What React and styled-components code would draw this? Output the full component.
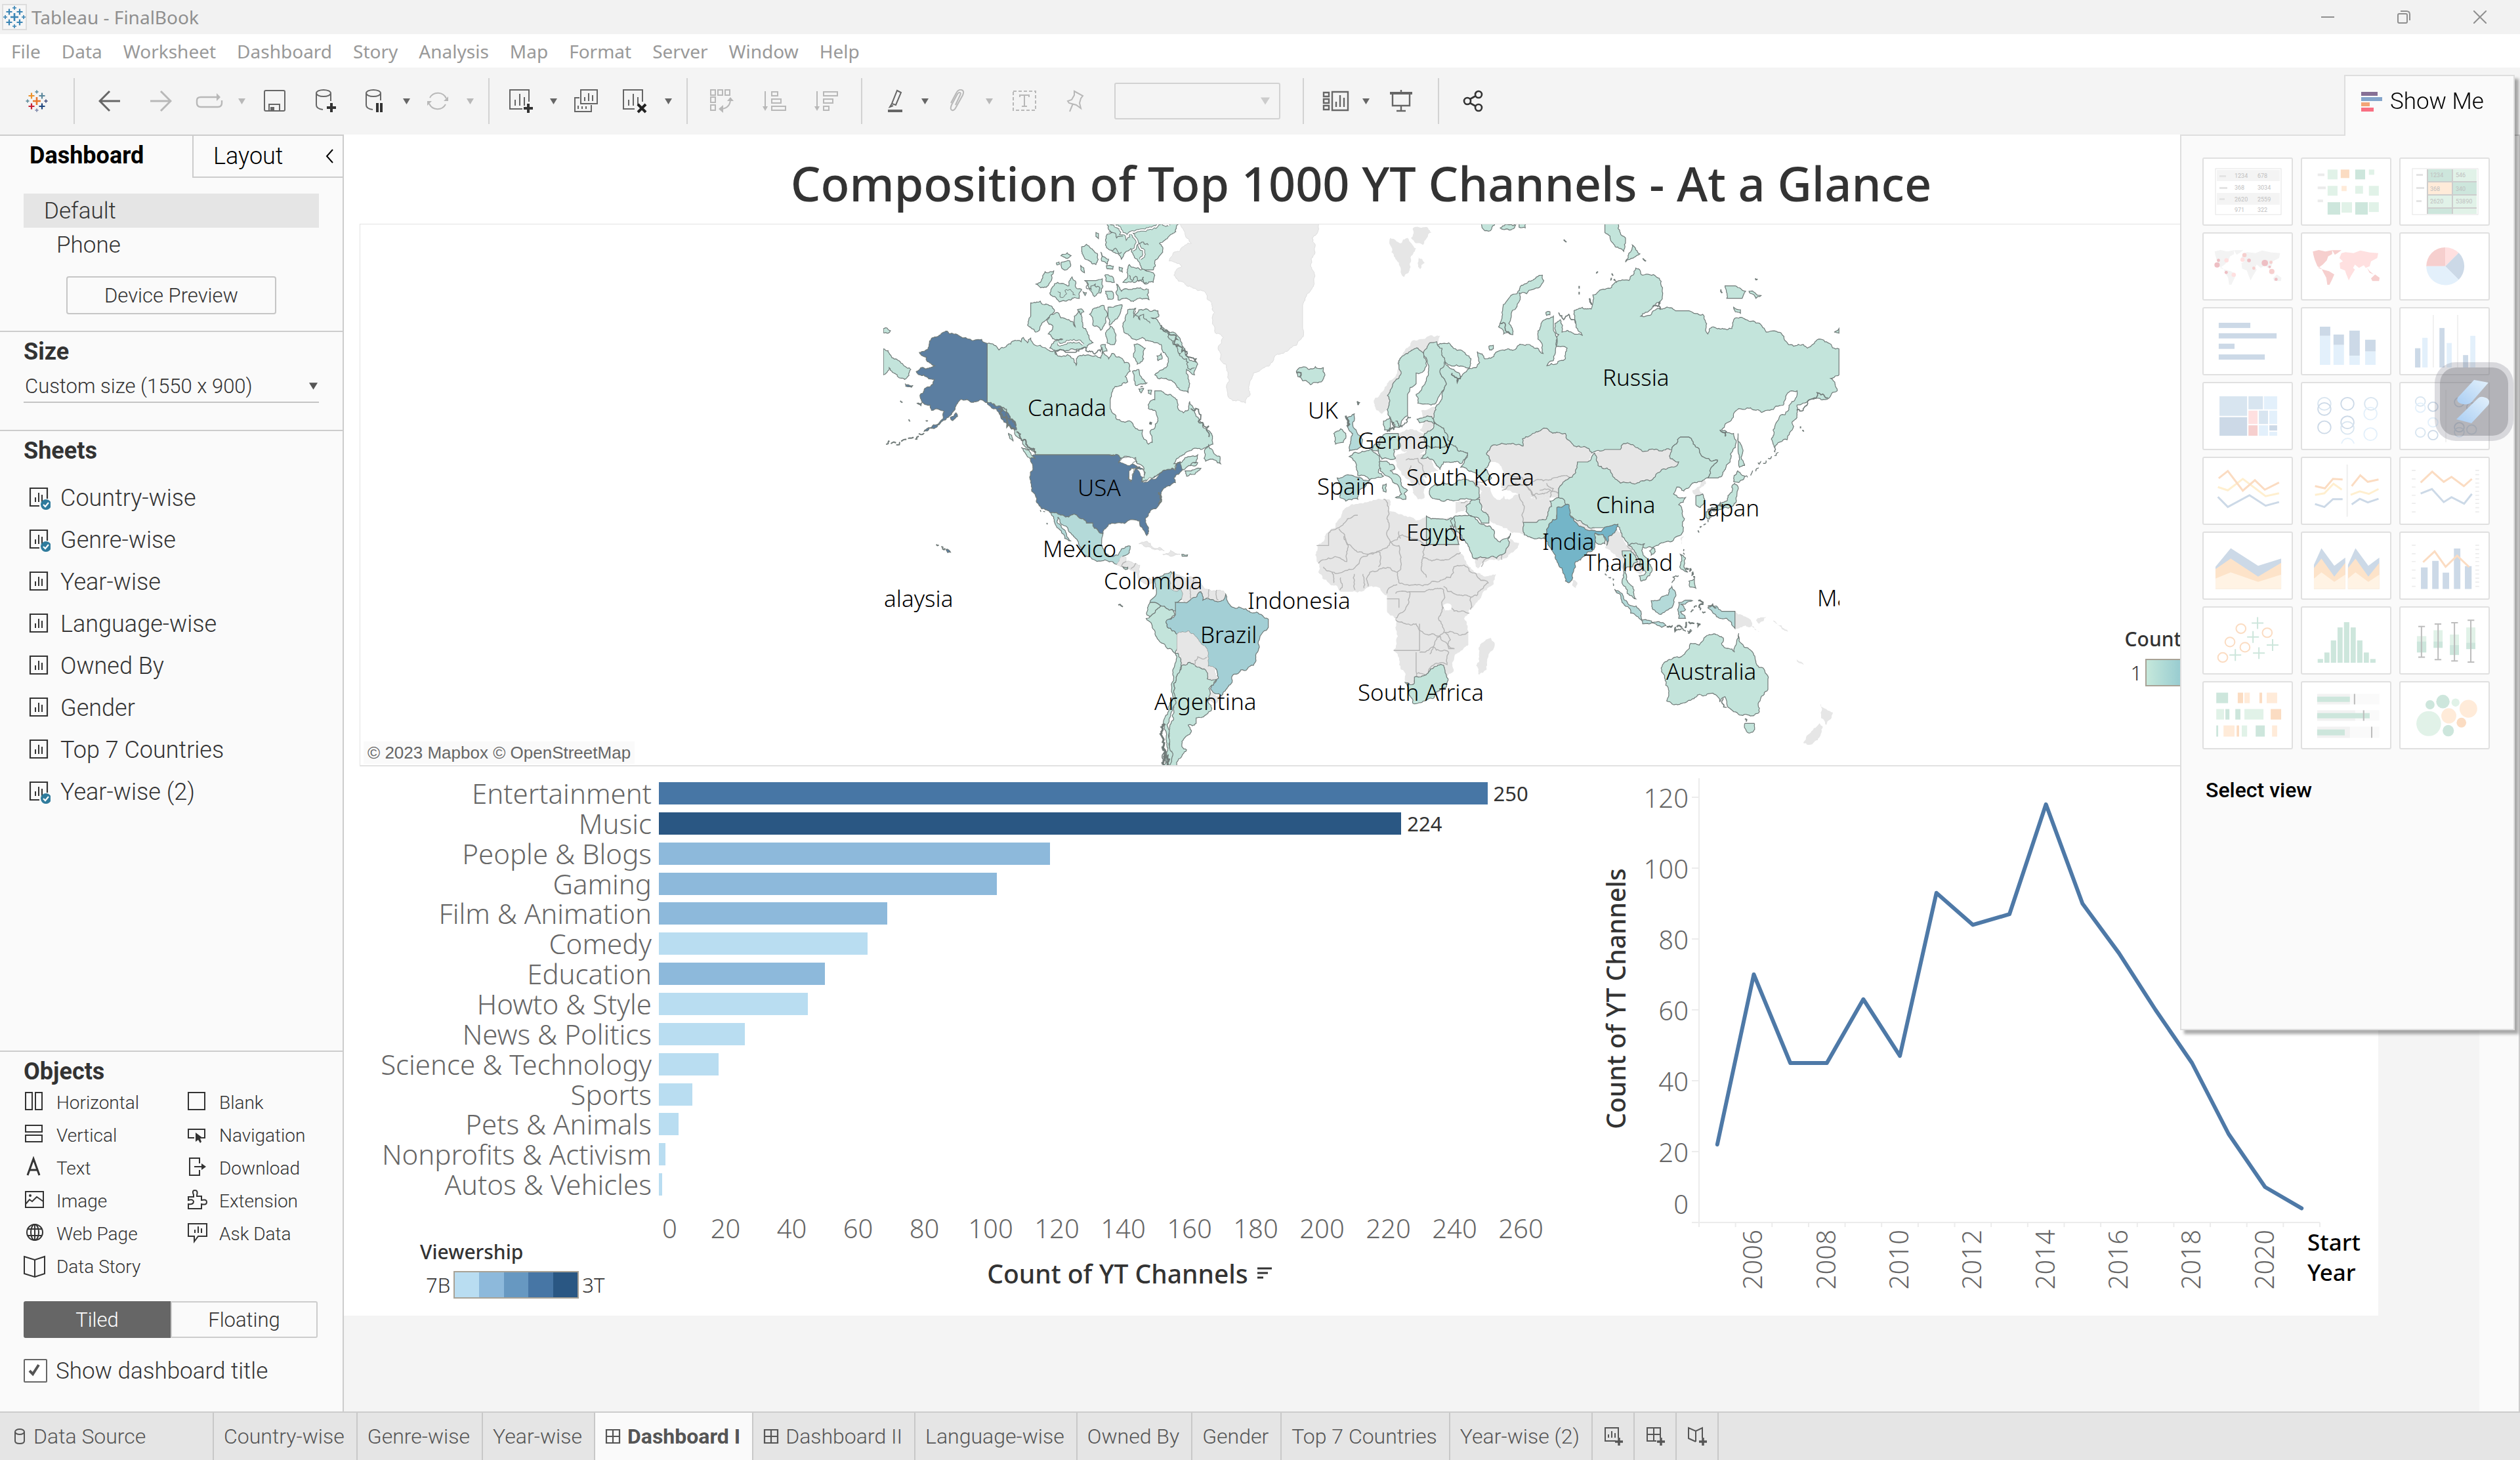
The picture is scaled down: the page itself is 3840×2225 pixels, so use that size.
import React from "react";
import styled, { createGlobalStyle, css } from "styled-components";

const ui = `Roboto, "Open Sans", sans-serif`;
const viz = `"Noto Sans", "Open Sans", sans-serif`;

const Global = createGlobalStyle`
  * { box-sizing: border-box; }
  body { margin: 0; background: #f4f4f4; font-family: ${ui}; color: #333; }
  button, select, input { font: inherit; color: inherit; margin: 0; }
  button { background: none; border: 0; padding: 0; }
  ul { list-style: none; margin: 0; padding: 0; }
  h1, h2, p { margin: 0; }
  svg { display: block; }
`;

/* ---------- window chrome ---------- */

const Window = styled.div`
  display: flex;
  flex-direction: column;
  min-height: 100vh;
  position: relative;
  overflow: hidden;
`;

const TitleBar = styled.header`
  display: flex;
  align-items: center;
  height: 52px;
  padding: 0 3px;
  gap: 7px;
  background: #f2f2f2;
  color: #8f8f8f;
  font: 400 28px/40px ${viz};
`;

const WindowButtons = styled.div`
  display: flex;
  gap: 72px;
  margin-left: auto;
  padding-right: 36px;
`;

const WindowButton = styled.button`
  display: grid;
  place-items: center;
  width: 44px;
  height: 44px;
`;

const MenuBar = styled.nav`
  display: flex;
  align-items: center;
  gap: 32px;
  height: 51px;
  padding: 0 17px;
  background: #fff;
  color: #999;
  font: 400 28px/40px ${viz};
`;

const ToolBar = styled.div`
  display: flex;
  align-items: center;
  height: 102px;
  background: #f4f4f4;
`;

const ToolGroup = styled.div`
  display: flex;
  align-items: center;
  height: 70px;
  padding: 0 ${(p) => p.$right || 0}px 0 ${(p) => p.$left || 0}px;
  border-right: 2px solid ${(p) => (p.$last ? "transparent" : "#d2d2d2")};
`;

const Tool = styled.button`
  display: grid;
  place-items: center;
  width: ${(p) => p.$w}px;
  height: 60px;
  color: ${(p) => (p.disabled ? "#b8b8b8" : "#666")};
`;

const FitBox = styled.div`
  display: grid;
  align-items: center;
  width: 253px;
  height: 56px;
  margin-left: 24px;
  > * { grid-area: 1 / 1; }
  > svg { justify-self: end; margin-right: 16px; color: #ccc; }
`;

const FitSelect = styled.select`
  appearance: none;
  width: 100%;
  height: 56px;
  border: 2px solid #d2d2d2;
  border-radius: 3px;
  background: #f4f4f4;
  opacity: 1;
`;

const Body = styled.div`
  display: flex;
  flex: 1;
`;

/* ---------- side panel ---------- */

const Side = styled.aside`
  display: flex;
  flex-direction: column;
  flex: none;
  width: 524px;
  border: solid #ccc;
  border-width: 2px 2px 0 0;
  background: #fafafa;
  font-weight: 300;
`;

const SideTabs = styled.div`
  display: flex;
  height: 64px;
`;

const SideTab = styled.button`
  display: flex;
  align-items: center;
  justify-content: space-between;
  color: #000;
  font-size: 36px;
  font-weight: ${(p) => (p.$active ? 700 : 300)};
  ${(p) =>
    p.$active
      ? css`width: 293px; padding: 0 0 4px 45px;`
      : css`flex: 1; padding: 0 14px 0 30px; border: solid #ccc; border-width: 0 0 2px 2px;`}
`;

const Section = styled.section`
  padding: ${(p) => p.$pad};
  border-bottom: ${(p) => (p.$last ? 0 : 2)}px solid #ccc;
  flex: ${(p) => (p.$grow ? 1 : "none")};
`;

const Heading = styled.h2`
  font-size: 36px;
  line-height: 44px;
  font-weight: 700;
`;

const Device = styled.button`
  display: block;
  width: 100%;
  height: 52px;
  text-align: left;
  font-size: 35px;
  font-weight: 300;
  padding-left: ${(p) => (p.$nested ? 50 : 31)}px;
  background: ${(p) => (p.$selected ? "#e5e5e5" : "none")};
`;

const PreviewButton = styled.button`
  display: block;
  width: 320px;
  height: 58px;
  margin: 22px auto 0;
  border: 2px solid #c6c6c6;
  border-radius: 4px;
  font-size: 31px;
  font-weight: 300;
`;

const SizeField = styled.div`
  display: grid;
  align-items: center;
  margin-top: 6px;
  border-bottom: 2px solid #c4c4c4;
  > * { grid-area: 1 / 1; }
  > svg { justify-self: end; margin-right: 2px; color: #555; pointer-events: none; }
`;

const SizeSelect = styled.select`
  appearance: none;
  border: 0;
  background: none;
  height: 48px;
  padding: 0 0 0 2px;
  font-size: 31px;
  font-weight: 300;
`;

const SheetList = styled.ul`
  margin-top: 18px;
  padding-left: 7px;
`;

const SheetItem = styled.li`
  display: flex;
  align-items: center;
  gap: 15px;
  height: 64px;
  font-size: 36px;
`;

const ObjectGrid = styled.ul`
  display: grid;
  grid-template-columns: 248px 1fr;
  grid-auto-rows: 50px;
  margin-bottom: 28px;
`;

const ObjectItem = styled.li`
  display: flex;
  align-items: center;
  gap: 14px;
  font-size: 28px;
  color: #333;
`;

const Toggle = styled.div`
  display: grid;
  grid-template-columns: 1fr 1fr;
  height: 56px;
`;

const ToggleButton = styled.button`
  font-size: 31px;
  font-weight: 300;
  border: 2px solid ${(p) => (p.$on ? "#666" : "#ccc")};
  border-radius: ${(p) => (p.$on ? "3px 0 0 3px" : "0 3px 3px 0")};
  background: ${(p) => (p.$on ? "#666" : "#fafafa")};
  color: ${(p) => (p.$on ? "#fff" : "#333")};
`;

const CheckLabel = styled.label`
  display: flex;
  align-items: center;
  gap: 13px;
  height: 44px;
  margin-top: 28px;
  font-size: 35px;
`;

const CheckBox = styled.span`
  display: grid;
  place-items: center;
  > * { grid-area: 1 / 1; }
  input {
    appearance: none;
    width: 36px;
    height: 36px;
    border: 2px solid #666;
    border-radius: 2px;
    background: #fff;
  }
  svg { z-index: 1; pointer-events: none; color: #555; }
`;

/* ---------- dashboard ---------- */

const Stage = styled.main`
  display: flex;
  align-items: flex-start;
  flex: 1;
  padding-right: 154px;
`;

const ScrollTrack = styled.div`
  flex: none;
  width: 62px;
  background: #fafafa;
  border: solid #ccc;
  border-width: 2px 2px 0 0;
`;

const Canvas = styled.article`
  flex: 1;
  padding: 0 24px;
  background: #fff;
  font-family: ${viz};
`;

const DashTitle = styled.h1`
  height: 136px;
  padding-top: 22px;
  text-align: center;
  font: 500 72px/104px ${viz};
  color: #333;
`;

const MapPane = styled.section`
  display: grid;
  grid-template-columns: 1fr 1457px 1fr;
  border: 1px solid #e2e2e2;
  border-bottom: 2px solid #e2e2e2;
`;

const Attribution = styled.p`
  align-self: end;
  justify-self: start;
  margin: 0 0 2px 5px;
  padding: 0 6px;
  background: #fafafa;
  color: #666;
  font: 26px/34px "Liberation Sans", Arial, sans-serif;
`;

const Legend = styled.div`
  color: #333;
  font-size: 31px;
  line-height: 40px;
  font-weight: 300;
  padding: ${(p) => p.$pad};
`;

const LegendTitle = styled.div`
  font-size: 30px;
  font-weight: 500;
`;

const LegendRow = styled.div`
  display: flex;
  align-items: center;
  gap: 5px;
  padding-left: 9px;
  margin-top: ${(p) => p.$top}px;
`;

const Ramp = styled.div`
  width: 191px;
  height: 42px;
  border: 2px solid #a8a296;
  background: ${(p) => p.$fill};
`;

const Lower = styled.div`
  display: flex;
`;

const BarChart = styled.section`
  flex: 1;
  padding-top: 18px;
`;

const Bars = styled.div`
  display: flex;
  flex-direction: column;
  height: 642px;
`;

const BarRow = styled.div`
  display: flex;
  align-items: center;
  flex: 1;
  min-height: 0;
`;

const BarLabel = styled.div`
  width: 445px;
  margin-right: 11px;
  text-align: right;
  font-size: 42px;
  line-height: 44px;
  font-weight: 300;
  color: #666;
  white-space: nowrap;
`;

const Bar = styled.div`
  height: 34px;
  background: ${(p) => p.$color};
`;

const BarValue = styled.div`
  padding-left: 9px;
  font-size: 31px;
  line-height: 40px;
  color: #333;
`;

const BarFoot = styled.div`
  display: flex;
`;

const FootLegend = styled.div`
  width: 456px;
`;

const FootAxis = styled.div`
  flex: 1;
`;

const AxisRow = styled.div`
  display: flex;
  margin-top: 20px;
  padding-left: 5px;
  font-size: 40px;
  line-height: 48px;
  font-weight: 300;
  color: #666;
`;

const AxisTick = styled.div`
  width: ${(p) => (p.$first ? 46 : 101)}px;
  text-align: ${(p) => (p.$first ? "left" : "center")};
`;

const AxisTitle = styled.div`
  display: flex;
  justify-content: center;
  align-items: center;
  gap: 12px;
  margin-top: 21px;
  font-size: 39px;
  line-height: 48px;
  font-weight: 500;
  color: #333;
`;

const LineSvg = styled.svg`
  width: 1186px;
  height: 837px;
  margin-right: -24px;
  font-family: ${viz};
`;

/* ---------- show me panel ---------- */

const ShowMe = styled.section`
  position: absolute;
  top: 114px;
  right: 8px;
  width: 510px;
  filter: drop-shadow(6px 6px 2px rgba(0, 0, 0, 0.32));
`;

const ShowMeTab = styled.button`
  position: relative;
  z-index: 1;
  display: flex;
  align-items: center;
  gap: 12px;
  width: 260px;
  height: 93px;
  margin: 0 0 -2px auto;
  padding: 0 0 14px 24px;
  border: 2px solid #dedede;
  border-bottom: 0;
  background: #fafafa;
  color: #000;
  font-size: 35px;
  font-weight: 300;
`;

const ShowMeBody = styled.div`
  height: 1365px;
  padding: 33px 36px 0 32px;
  border: 2px solid #dedede;
  background: #fafafa;
`;

const Cards = styled.div`
  display: grid;
  grid-template-columns: repeat(3, 138px);
  grid-auto-rows: 104px;
  gap: 10px 12px;
`;

const Card = styled.button`
  border: 2px solid #e0e0e0;
  border-radius: 3px;
  background: #fff;
  svg { width: 134px; height: 100px; }
`;

const SelectView = styled.p`
  margin: 40px 0 0 5px;
  color: #000;
  font-size: 32px;
  line-height: 44px;
  font-weight: 500;
`;

const Widget = styled.div`
  position: absolute;
  top: 552px;
  right: 10px;
  display: grid;
  place-items: center;
  width: 120px;
  height: 120px;
  border: 8px solid rgba(120, 120, 135, 0.26);
  border-radius: 32px;
  background: rgba(120, 120, 130, 0.55);
  background-clip: padding-box;
`;

/* ---------- workbook tabs ---------- */

const SheetTabs = styled.nav`
  display: flex;
  height: 74px;
  border-top: 2px solid #ccc;
  background: #e5e5e5;
`;

const SheetTab = styled.button`
  display: flex;
  align-items: center;
  gap: 10px;
  height: 72px;
  padding: ${(p) => (p.$tool ? "0 15px" : "0 18px 0 15px")};
  border-right: 2px solid #c8c8c8;
  font-size: 32px;
  font-weight: ${(p) => (p.$active ? 700 : 300)};
  background: ${(p) => (p.$active ? "#fafafa" : "none")};
  color: #555;
  white-space: nowrap;
  ${(p) => p.$source && css`width: 326px; padding-left: 21px; gap: 12px;`}
`;

/* ---------- icons ---------- */

const Icon = ({ w = 34, h = 34, sw = 2, children }) => (
  <svg width={w} height={h} viewBox={`0 0 ${w} ${h}`} fill="none" stroke="currentColor" strokeWidth={sw} aria-hidden="true">
    {children}
  </svg>
);

const Caret = ({ s = 11 }) => (
  <svg width={s} height={s - 2} viewBox="0 0 10 8" fill="currentColor" aria-hidden="true">
    <path d="M0 0H10L5 8Z" />
  </svg>
);

const cross = (x, y, r) => `M${x - r} ${y}H${x + r}M${x} ${y - r}V${y + r}`;

const AppIcon = () => (
  <Icon w={38} h={40}>
    <rect x="1" y="1" width="36" height="38" fill="#f6f6f6" stroke="#ddd" />
    <g stroke="#3a85b5">
      <path strokeWidth="2.6" d={cross(19, 20, 6)} />
      <path strokeWidth="2.2" d={cross(11, 12, 4.5) + cross(27, 12, 4.5) + cross(11, 28, 4.5) + cross(27, 28, 4.5)} />
      <path strokeWidth="1.6" d={cross(19, 6, 3) + cross(19, 34, 3) + cross(5, 20, 3) + cross(33, 20, 3)} />
    </g>
  </Icon>
);

const LogoIcon = () => (
  <Icon w={34} h={34}>
    <path stroke="#e8762d" strokeWidth="2.6" d={cross(17, 17, 6)} />
    <path stroke="#eb9129" strokeWidth="2.2" d={cross(9, 9, 4.5)} />
    <path stroke="#5b879b" strokeWidth="2.2" d={cross(25, 9, 4.5)} />
    <path stroke="#c72035" strokeWidth="2.2" d={cross(9, 25, 4.5)} />
    <path stroke="#1f457e" strokeWidth="2.2" d={cross(25, 25, 4.5)} />
    <path stroke="#7199a6" strokeWidth="2" d={cross(17, 3, 2.5) + cross(3, 17, 2.5)} />
    <path stroke="#5c6692" strokeWidth="2" d={cross(31, 17, 2.5)} />
    <path stroke="#8f97b5" strokeWidth="2" d={cross(17, 31, 2.5)} />
  </Icon>
);

const plus = (x, y) => <path stroke="#333" strokeWidth="4" d={cross(x, y, 7)} />;

const tools = {
  back: <Icon w={34} sw={3}><path d="M33 17H2M17 2L2 17L17 32" /></Icon>,
  forward: <Icon w={34} sw={3}><path d="M1 17H32M17 2L32 17L17 32" /></Icon>,
  redo: <Icon w={42} h={26} sw={2.4}><path d="M34 7H8Q2 7 2 12V16Q2 22 8 22H34Q40 22 40 16V12" /><path d="M32 1L38 7L32 13Z" fill="currentColor" strokeWidth="0" /></Icon>,
  save: <Icon><rect x="1" y="1" width="31" height="31" rx="2" /><path d="M8 32V22H24V32" /><path d="M10 26H16V32H10Z" fill="currentColor" strokeWidth="0" /></Icon>,
  dataAdd: <Icon w={34} h={36}><ellipse cx="13" cy="6" rx="11" ry="5" /><path d="M2 6V24Q2 30 12 31M24 6V18" />{plus(25, 28)}</Icon>,
  dataPause: <Icon w={30} h={36}><ellipse cx="13" cy="6" rx="11" ry="5" /><path d="M2 6V24Q2 30 12 31M24 6V17" /><path stroke="#333" strokeWidth="4" d="M19 21V35M25 21V35" /></Icon>,
  refresh: <Icon><path d="M5 12A14 14 0 0 1 30 13M29 22A14 14 0 0 1 4 21" /><path d="M33 10V17H26ZM1 24V17H8Z" fill="currentColor" strokeWidth="0" /></Icon>,
  newSheet: <Icon w={38} h={38}><path d="M21 31H2V2H31V20" /><path d="M10 26V17M17 26V8M24 26V13" />{plus(30, 30)}</Icon>,
  duplicate: <Icon w={38} h={36}><rect x="11" y="1" width="25" height="21" /><path d="M17 18V12M23 18V6M29 18V9M9 13H2V34H27V24M7 30V25M13 30V26M19 30V26" /></Icon>,
  clear: <Icon w={38} h={38}><path d="M19 31H2V2H31V20" /><path d="M10 26V17M17 26V8M24 26V13" /><path stroke="#222" strokeWidth="4" d="M24 24L36 36M36 24L24 36" /></Icon>,
  swap: <Icon w={36} h={36}><path d="M1 1h7v8h-7zM12 1h7v8h-7zM23 1h7v8h-7zM1 12h7v8h-7zM1 24h7v8h-7zM31 15Q31 28 18 30" /><path d="M26 18L31 12L36 18ZM20 24L13 30L20 36Z" fill="currentColor" strokeWidth="0" /></Icon>,
  sortAsc: <Icon w={36} h={34}><path d="M4 2V28M14 3h9v6h-9zM14 14h14v6h-14zM14 25h21v6h-21z" /><path d="M0 25H8L4 32Z" fill="currentColor" strokeWidth="0" /></Icon>,
  sortDesc: <Icon w={36} h={34}><path d="M4 2V28M14 3h21v6h-21zM14 14h14v6h-14zM14 25h8v6h-8z" /><path d="M0 25H8L4 32Z" fill="currentColor" strokeWidth="0" /></Icon>,
  highlight: <Icon w={28} h={36}><path d="M16 2L22 5L14 24L8 22ZM8 22L5 27L10 25" /><path strokeWidth="4" d="M2 33H24" /></Icon>,
  clip: <Icon w={30} h={36}><path d="M13 24L20 9Q22 5 19 5Q17 5 15 9L7 24Q4 31 8 32Q11 33 14 27L24 9Q27 2 22 1Q17 0 14 6L6 21" /></Icon>,
  text: <Icon w={36} h={32}><rect x="1" y="1" width="34" height="29" strokeDasharray="5 3" /><path d="M11 10V7H25V10M18 7V24M14 24H22" /></Icon>,
  pin: <Icon w={28} h={34}><path d="M12 2L25 9L22 13L20 20L22 28L15 23L4 20L2 17L8 15L12 8ZM10 21L5 33" /></Icon>,
  layout: <Icon w={42} h={32}><path d="M2 3h8v6h-8zM2 13h8v6h-8zM2 23h8v6h-8zM15 2h24v28h-24zM21 25V17M27 25V7M33 25V11" strokeWidth="2.4" /></Icon>,
  present: <Icon w={36} h={34}><path strokeWidth="4" d="M1 5H35" /><path d="M18 0V4M5 6V24H31V6M18 24V32M11 32H25" strokeWidth="2.4" /></Icon>,
  share: <Icon w={34} h={34} sw={2.6}><g stroke="#333"><circle cx="8" cy="17" r="5" /><circle cx="25" cy="7" r="5" /><circle cx="25" cy="27" r="5" /><path d="M12 14L21 9M12 20L21 25" /></g></Icon>,
};

const toolbar = [
  { left: 14, right: 12, items: [["back", 78, "Undo"], ["forward", 78, "Redo", 1], ["redo", 70, "Replay", 1], ["caret", 28, "Replay options", 1], ["save", 74, "Save"], ["dataAdd", 82, "New data source"], ["dataPause", 66, "Pause updates"], ["caret", 30, "Pause options"], ["refresh", 66, "Run update", 1], ["caret", 32, "Update options", 1]] },
  { left: 14, right: 16, items: [["newSheet", 68, "New worksheet"], ["caret", 30, "New options"], ["duplicate", 70, "Duplicate"], ["clear", 78, "Clear sheet"], ["caret", 24, "Clear options"]] },
  { left: 12, right: 14, items: [["swap", 80, "Swap rows and columns", 1], ["sortAsc", 80, "Sort ascending", 1], ["sortDesc", 78, "Sort descending", 1]] },
  { left: 18, right: 34, fit: true, items: [["highlight", 66, "Highlight"], ["caret", 22, "Highlight options"], ["clip", 76, "Group members", 1], ["caret", 22, "Group options", 1], ["text", 86, "Show mark labels", 1], ["pin", 70, "Fix axes", 1]] },
  { left: 12, right: 10, items: [["layout", 74, "Show or hide cards"], ["caret", 16, "Card options"], ["present", 92, "Presentation mode"]] },
];

const SheetIcon = ({ used }) => (
  <Icon w={34} h={36}>
    <path d={used ? "M17 30H3V3H29V19" : "M3 3H29V30H3Z"} strokeWidth="2.2" />
    <path d="M11 24V17M16 24V10M21 24V13" />
    {used && <><circle cx="27" cy="28" r="8" fill="#2f7b9c" stroke="none" /><path stroke="#fff" strokeWidth="2.2" d="M23 28L26 31L31 25" /></>}
  </Icon>
);

const objectIcons = {
  Horizontal: <path d="M3 3H13V29H3ZM18 3H28V29H18Z" />,
  Blank: <path d="M3 3H28V29H3Z" />,
  Vertical: <path d="M3 3H28V13H3ZM3 18H28V28H3Z" />,
  Navigation: <><path d="M12 22H3V9H28V22H24" /><path d="M14 14V28L18 25L21 30L23 28L21 23H26Z" fill="currentColor" strokeWidth="0" /></>,
  Text: <path strokeWidth="3" d="M6 29L15 4L24 29M9 21H21" />,
  Download: <><path d="M20 11V3H5V29H20V21M12 16H26" /><path d="M23 11V21L30 16Z" fill="currentColor" strokeWidth="0" /></>,
  Image: <><path d="M3 4H30V28H3ZM3 23L9 16L13 19L20 12L30 19" /><circle cx="10" cy="10" r="2" fill="currentColor" strokeWidth="0" /></>,
  Extension: <path d="M3 12H11V9Q8 2 13 2Q18 2 16 9V11H23V17Q31 15 31 20Q31 25 23 23V30H3V23Q11 24 11 19Q10 15 3 17Z" />,
  "Web Page": <><circle cx="17" cy="16" r="12" /><ellipse cx="17" cy="16" rx="6" ry="12" /><path d="M6 11H28M6 21H28M17 4V28" /></>,
  "Ask Data": <path d="M3 3H31V22H18L12 30V22H3ZM13 17V12M18 17V7M23 17V10" />,
  "Data Story": <path d="M1 3L17 8L32 3V29L17 34L1 29ZM17 8V34" />,
};

const objects = ["Horizontal", "Blank", "Vertical", "Navigation", "Text", "Download", "Image", "Extension", "Web Page", "Ask Data", "Data Story"];

const GridIcon = () => <Icon w={24} h={24}><path strokeWidth="2.2" d="M2 2H22V22H2ZM12 2V22M2 12H22" /></Icon>;

/* ---------- map ---------- */

/* Adds small bends to every edge; an edge shared by two countries bends the same way in both. */
const jitter = (ax, ay, bx, by) => {
  const s = Math.sin((ax + bx) * 12.9898 + (ay + by) * 78.233 + Math.abs(ax - bx) * 3.1 + Math.abs(ay - by) * 5.7) * 43758.5453;
  return (s - Math.floor(s)) * 2 - 1;
};

const bend = (a, b, rough, out) => {
  const dx = b[0] - a[0];
  const dy = b[1] - a[1];
  const len = Math.hypot(dx, dy);
  if (len < 6 || dx === 0 || dy === 0) {
    out.push(b);
    return;
  }
  const flip = a[0] < b[0] || (a[0] === b[0] && a[1] < b[1]) ? 1 : -1;
  const k = jitter(a[0], a[1], b[0], b[1]) * rough * flip;
  const m = [(a[0] + b[0]) / 2 - dy * k, (a[1] + b[1]) / 2 + dx * k];
  bend(a, m, rough, out);
  bend(m, b, rough, out);
};

const coast = (text, closed = true, rough = 0.19) => {
  const pts = text.trim().split(/\s+/).map((p) => p.split(",").map(Number));
  const out = [pts[0]];
  for (let i = 1; i < pts.length; i++) bend(pts[i - 1], pts[i], rough, out);
  if (closed) bend(pts[pts.length - 1], pts[0], rough, out);
  return "M" + out.map((p) => `${p[0].toFixed(1)} ${p[1].toFixed(1)}`).join("L") + (closed ? "Z" : "");
};

const GREEN = "#c3e4db";
const TEAL = "#b4dad9";
const BRAZIL = "#a3cfd5";
const INDIA = "#74b5c8";
const USA = "#5b7ea1";
const GRAY = "#e6e6e6";

const west = [
  ["#ececec", "985,20 1420,20 1400,60 1395,140 1400,200 1370,250 1370,310 1365,345 1330,370 1285,390 1250,425 1215,440 1200,480 1190,525 1150,518 1130,480 1110,400 1120,340 1100,330 1085,250 1060,210 1000,190 965,165 990,140 950,125 985,95 1020,75 1000,50", 1],
  [GREEN, "378,357 400,362 415,375 425,368 440,362 460,350 485,352 492,340 505,355 515,342 525,360 545,362 565,372 590,378 600,392 630,388 650,400 658,418 662,395 700,390 735,398 740,380 760,400 770,385 800,398 825,415 828,435 812,450 820,465 800,475 780,478 765,515 765,540 785,570 820,575 850,597 867,600 870,625 885,640 897,635 890,605 905,595 915,575 905,545 885,540 890,520 905,515 905,490 925,490 955,500 975,515 978,540 995,552 1010,545 1015,520 1030,550 1045,570 1060,595 1085,615 1088,640 1050,655 1010,660 975,680 965,695 1000,678 1040,670 1035,690 1000,710 990,712 985,690 972,695 970,710 930,715 918,724 885,745 862,748 875,720 870,705 850,695 845,678 820,675 795,680 762,670 530,670 515,655 490,640 485,625 465,605 445,580 415,540 378,523"],
  [USA, "525,670 762,670 800,680 792,692 830,690 860,705 830,708 822,735 830,745 842,715 855,705 870,715 865,745 890,740 915,728 930,715 970,713 975,695 985,690 992,712 965,735 970,748 945,758 925,775 920,800 915,815 885,835 875,850 886,885 880,897 868,880 858,855 835,852 800,862 760,865 745,880 742,892 728,885 710,862 690,862 680,850 660,840 625,845 595,832 578,833 565,825 540,810 530,785 517,755 522,710 515,680"],
  [USA, "248,322 262,330 285,332 300,341 340,347 378,357 378,523 345,520 320,517 298,514 285,525 270,550 250,567 230,582 205,595 180,604 210,585 240,568 243,548 225,542 203,545 198,530 178,525 168,500 185,482 208,472 212,458 190,452 165,445 155,436 175,424 200,425 213,420 190,408 187,396 165,382 190,374 197,350 220,338"],
  [USA, "378,523 400,530 420,533 440,550 468,582 470,600 455,598 440,582 425,570 412,548 390,535"],
  [USA, "262,565 280,552 285,562 270,574"],
  [USA, "120,470 145,475 140,480 122,477"],
  [USA, "158,525 172,524 170,532"],
  [USA, "248,936 258,938 263,944 254,945"],
  [GREEN, "52,372 75,390 100,405 115,418 138,430 118,458 95,445 70,425 52,445"],
  [GREEN, "52,315 64,314 74,321 66,328 52,327"],
  [GREEN, "755,20 980,20 950,55 920,75 930,100 905,125 900,150 870,150 850,120 830,90 800,120 775,100 750,80 755,50 770,45"],
  [GREEN, "785,190 800,210 830,205 860,200 885,205 888,235 830,238 790,235"],
  [GREEN, "825,135 860,150 905,165 900,185 850,180 805,185 820,165"],
  [GREEN, "675,85 690,78 705,90 725,105 720,135 700,125 680,110"],
  [GREEN, "735,100 760,120 755,135 738,125"],
  [GREEN, "610,110 630,102 642,110 625,117"],
  [GREEN, "610,130 638,125 640,140 625,150 612,144"],
  [GREEN, "596,130 604,128 606,134 598,136"],
  [GREEN, "530,190 560,155 588,152 580,180 555,200 540,195"],
  [GREEN, "575,215 600,185 635,195 645,170 655,195 675,205 668,230 640,235 605,240 590,225"],
  [GREEN, "685,180 720,180 740,175 735,215 715,225 700,205"],
  [GREEN, "748,165 773,170 778,185 752,182"],
  [GREEN, "750,210 770,210 775,230 758,233"],
  [GREEN, "793,142 804,145 803,156 795,153"],
  [GREEN, "720,45 728,48 728,62 720,56"],
  [GREEN, "672,138 682,145 684,158 674,152"],
  [GREEN, "753,138 775,140 773,148 755,147"],
  [GREEN, "680,212 690,214 686,222"],
  [GREEN, "515,243 545,238 590,265 565,290 550,300 530,325 505,305 515,280"],
  [GREEN, "565,290 600,270 610,285 635,290 655,310 652,280 665,265 675,280 678,310 700,345 712,355 690,370 655,375 620,378 575,370 590,350 615,345 570,330 585,310"],
  [GREEN, "662,262 675,260 682,268 672,275"],
  [GREEN, "700,275 725,255 745,250 750,290 735,320 710,305"],
  [GREEN, "758,255 802,248 795,275 775,295 762,305 758,285"],
  [GREEN, "750,330 765,308 782,330 778,360 755,355"],
  [GREEN, "735,362 750,360 755,378 738,385"],
  [GREEN, "805,300 820,262 845,258 838,285 855,262 880,260 915,265 918,280 895,285 920,300 940,320 960,325 990,360 1000,385 1040,415 1030,445 1005,430 1015,470 1010,495 975,480 955,460 915,455 905,445 940,425 948,400 925,360 890,350 840,345 808,325"],
  [GREEN, "840,360 875,370 870,400 850,415 838,395"],
  [GREEN, "835,435 855,430 862,450 880,468 845,475 840,455"],
  [GREEN, "912,392 925,385 928,400 915,405"],
  [GREEN, "884,488 895,488 893,500 885,497"],
  [GREEN, "855,485 870,483 862,496"],
  [GREEN, "1060,680 1075,640 1088,660 1110,675 1112,695 1095,685 1065,688"],
  [GREEN, "1000,715 1020,715 1050,708 1030,725 1005,730"],
  [GREEN, "1018,698 1040,692 1036,699"],
  [GREEN, "485,650 510,658 530,682 500,668"],
  [GREEN, "445,610 455,615 460,632 450,625"],
  [GREEN, "1350,435 1365,425 1390,430 1410,422 1435,425 1440,445 1425,465 1395,473 1370,462 1355,450"],
  [TEAL, "578,833 595,832 625,845 660,840 680,850 690,862 710,862 728,885 742,892 738,915 745,940 765,955 790,952 800,935 828,927 825,945 805,955 785,978 770,970 740,968 700,955 675,940 665,915 645,895 625,870 600,845 598,860 620,880 640,912 622,905 605,880 590,860"],
  [GRAY, "785,978 800,955 815,958 815,970 845,975 858,980 855,1005 870,1020 905,1022 900,1030 860,1025 825,990 800,985", 1],
  [GREEN, "803,984 820,986 820,991 808,990"],
  [GRAY, "855,920 880,913 920,930 935,940 905,937", 1],
  [GRAY, "930,950 955,938 985,950 960,955", 1],
  [GREEN, "990,950 1008,951 1007,955 991,955"],
  [TEAL, "905,1025 930,1010 955,998 960,1003 948,1020 955,1045 988,1048 990,1075 970,1085 972,1110 960,1105 925,1095 905,1085 890,1085 910,1050"],
  [GRAY, "960,1003 985,1010 1030,1015 1050,1030 1060,1045 1110,1050 1128,1062 1115,1080 1090,1078 1055,1080 1050,1055 1020,1075 1000,1085 990,1075 988,1048 955,1045 948,1020", 1],
  [GREEN, "890,1085 905,1085 925,1095 905,1115 890,1125 880,1120 882,1100"],
  [GREEN, "925,1095 960,1105 968,1120 940,1140 945,1155 975,1175 975,1215 970,1228 945,1215 920,1195 900,1160 878,1130 890,1125 905,1115"],
  [BRAZIL, "970,1085 1000,1085 1020,1075 1050,1055 1055,1080 1090,1078 1115,1080 1128,1062 1140,1090 1180,1102 1225,1112 1262,1132 1262,1155 1235,1185 1228,1225 1215,1262 1175,1275 1150,1290 1148,1310 1115,1348 1080,1328 1105,1298 1095,1270 1072,1265 1070,1220 1050,1200 1010,1165 975,1175 945,1155 940,1140 970,1120"],
  [GRAY, "975,1175 1010,1165 1050,1200 1070,1220 1072,1265 1095,1270 1100,1300 1070,1300 1065,1275 1030,1262 990,1262 975,1225", 1],
  [GRAY, "1075,1328 1110,1350 1100,1368 1072,1360", 1],
  [GREEN, "990,1262 1030,1260 1068,1280 1070,1300 1098,1302 1075,1328 1072,1362 1082,1390 1060,1405 1035,1410 1035,1425 1010,1430 1020,1445 1000,1465 990,1490 1005,1500 980,1525 975,1548 945,1548 952,1440 965,1340 975,1290"],
  [GREEN, "970,1228 978,1228 988,1265 975,1290 965,1340 955,1400 948,1460 950,1548 930,1548 935,1440 945,1400 958,1320 968,1260"],
];

const westWhite = [
  "790,690 820,676 850,690 830,698",
  "824,715 832,708 840,712 832,742 824,738",
  "844,706 866,710 872,735 860,728 850,712",
  "862,745 890,733 918,724 915,731 890,740",
];

const westGrayLines = ["1030,1015 1018,1045 1020,1075", "1075,1048 1070,1078", "1100,1050 1105,1078", "1030,1262 1040,1238 1070,1240", "815,970 800,985", "845,975 830,990"];

const westLines = [
  ["60,640 80,636 110,631 140,623 165,611 180,604", 2, "9 3"],
  ["412,540 425,560 440,575 455,595 466,600", 2.5],
  ["418,536 436,556 452,572 468,588", 1.6],
  ["470,605 485,625 500,640 530,665", 2.2],
  ["925,305 950,325 975,345 990,380 1010,395 1035,410", 2],
  ["930,315 945,322 955,345 980,360 985,385 1005,400 1030,425", 1.2],
  ["1018,540 1045,580 1075,620", 1.8],
  ["595,388 625,382 655,382 700,378 740,368", 1.6],
  ["690,185 705,205 718,190 728,212", 1.2],
  ["938,1430 933,1470 937,1500 930,1548", 3],
  ["928,1490 938,1510 932,1530 940,1548", 2.4],
  ["935,1500 928,1520 936,1548", 1.6],
  ["218,922 226,924", 2], ["234,928 246,933", 2],
  ["790,1092 800,1095 805,1097", 2],
  ["888,580 896,582", 4],
  ["1350,440 1365,445 1360,450", 2],
  ["860,480 868,478", 1.4],
  ["760,45 785,60 805,55", 1.2], ["850,80 870,72 885,80", 1.2],
  ["770,95 785,92 800,100", 1.2],
  ["825,165 835,180 845,168 855,182 870,170 880,185", 1.2],
  ["600,210 620,225 640,205 655,222", 1],
  ["845,265 858,290 870,275 890,300", 1.2],
  ["918,775 922,790 916,808", 2.4],
  ["105,518 112,523", 2], ["132,570 136,576", 1.6], ["185,573 192,574", 1.6],
  ["545,825 560,830", 1.4, "3 5"], ["565,862 568,865", 2],
];

const fjords = ["765,20 800,48 835,50 850,75 835,95", "828,50 860,38 900,30 950,26", "850,75 870,100 860,120", "600,355 640,350 680,360"];

const eastGray = [
  "125,808 165,800 205,795 222,795 220,825 260,838 300,855 330,843 360,848 405,850 425,900 440,960 470,1000 495,1010 533,1005 525,1035 480,1080 455,1105 440,1130 452,1165 452,1205 412,1235 410,1275 392,1290 390,1310 360,1345 330,1362 290,1368 275,1335 268,1310 250,1260 232,1220 247,1180 240,1130 215,1110 215,1065 200,1055 165,1040 115,1055 80,1055 45,1030 15,1000 10,960 12,925 40,890 75,850 110,810",
  "518,1185 528,1210 505,1275 482,1288 475,1262 482,1215",
  "470,962 505,960 560,945 575,905 600,918 580,945 540,968 480,990",
  "480,790 500,760 545,770 560,795 600,780 650,795 690,790 700,820 680,850 650,865 620,895 580,890 545,870 515,855 495,820",
  "415,802 458,797 445,825 415,835",
  "430,730 480,745 520,760 510,775 470,752",
  "180,510 215,470 245,440 265,380 310,345 370,335 365,352 340,355 322,385 305,370 280,380 250,420 230,480 230,530 200,555 182,540",
  "315,545 355,535 355,580 340,610 310,600",
  "248,612 300,600 325,610 330,645 310,670 260,660 250,640",
  "240,675 310,670 345,680 365,715 320,735 325,790 305,795 280,740 245,705",
  "75,760 85,740 95,760 80,795",
  "758,852 820,875 820,885 790,878 760,868",
  "860,900 885,870 900,895 915,925 940,920 965,960 985,985 955,1005 930,985 905,960 905,1000 890,960 870,945 850,930",
  "757,1022 770,1030 765,1045 755,1038",
  "1070,905 1080,898 1074,922",
  "1105,770 1140,740 1145,750 1125,765 1135,780 1115,785",
  "1229,1110 1270,1130 1300,1168 1260,1150 1229,1158",
  "1290,1135 1320,1125 1300,1145",
  "1478,1370 1495,1385 1515,1395 1495,1430 1480,1410",
  "1475,1425 1485,1435 1450,1485 1428,1480 1445,1455",
  "225,60 255,75 275,60 300,90 285,120 265,170 250,130 228,100",
  "290,35 345,45 320,80 285,60",
  "305,112 325,130 312,148",
  "505,665 520,645 560,640 612,645 610,625 650,605 680,595 735,610 760,645 812,665 800,690 770,690 765,720 740,740 715,765 715,790 690,790 650,795 600,785 555,765 520,760 530,730 510,715 545,700 530,690 512,690",
  "820,665 850,655 895,655 905,638 945,650 970,660 1045,655 1040,680 1065,690 1030,710 990,738 950,748 880,738 865,712 830,700",
  "1408,1245 1422,1252 1430,1260 1415,1255",
  "1340,1135 1365,1150 1385,1168 1360,1152",
];

const borders = [
  "130,840 100,850 75,875 45,890 45,925 10,925", "90,898 98,970 15,975", "75,878 92,898 165,948 225,915 215,850 205,795",
  "165,948 195,945 190,985", "225,915 250,925 255,970 245,1000", "225,915 260,895 325,925 320,960 315,985 330,1015", "330,842 330,922 425,922",
  "55,1000 100,995 135,970 165,948", "165,1000 200,990 245,1000 250,1030 310,1035 380,1020 400,1015 410,985 440,980 475,1005 510,1030 460,1070 410,1060 380,1040",
  "165,1000 160,1040", "120,1005 122,1050", "145,1005 148,1045", "80,1015 78,1050", "30,985 55,1000 60,1030", "245,1035 215,1060", "240,1060 280,1055 325,1055 380,1050 375,1090 365,1130 380,1170 365,1180 300,1145 240,1133",
  "280,1055 270,1100 240,1130", "310,1145 310,1220 235,1220", "300,1225 300,1280 295,1310", "310,1225 350,1210 370,1180 410,1215", "380,1170 452,1168",
  "375,1100 400,1098 455,1115", "460,1070 458,1105", "340,1230 350,1210 395,1225 390,1260 350,1262", "300,1285 330,1290 350,1262", "385,1170 400,1190 395,1215 412,1215",
  "255,905 250,885", "320,960 390,965 430,945", "215,1075 250,1075 250,1100",
  "430,805 450,800", "505,962 490,985", "545,945 550,965", "550,770 590,750 640,785 690,770", "570,720 610,735 650,795", "600,780 615,820 610,860", "640,745 700,735 760,740", "680,750 700,765 690,790", "660,770 720,775",
  "250,655 240,640", "270,685 305,680 320,700", "285,700 280,730", "320,700 330,735", "300,735 310,755", "905,960 925,950 945,975 960,990", "915,925 930,950", "470,750 500,745", "470,962 480,965",
];

const east = [
  [GREEN, "268,1310 295,1312 295,1295 325,1290 350,1270 380,1262 388,1290 393,1300 385,1325 350,1355 325,1362 290,1368 278,1340"],
  [GREEN, "330,842 360,850 405,848 412,870 400,870 425,922 330,922"],
  [GREEN, "410,845 455,840 490,865 515,870 530,905 545,915 570,905 575,890 570,925 560,945 505,960 470,962 455,930 435,905 410,860"],
  [GREEN, "455,840 445,815 465,795 485,795 490,825 512,845 512,862 490,862"],
  [GREEN, "400,855 410,845 413,870 408,880"],
  [GREEN, "340,765 370,755 420,745 470,750 483,762 485,790 455,795 420,798 375,800 345,790"],
  [GREEN, "362,360 395,355 430,375 460,400 455,425 430,420 385,408 410,430 430,450 450,430 475,425 485,410 478,380 500,400 530,385 585,375 610,360 640,365 670,385 655,345 675,290 700,280 700,320 710,360 700,405 680,420 735,400 740,370 710,365 705,300 720,290 725,325 740,320 785,335 760,265 810,260 815,220 850,205 920,180 940,145 960,165 1000,170 1018,200 1010,240 955,280 1000,260 1060,265 1095,265 1135,275 1150,330 1165,310 1220,315 1230,285 1300,300 1320,325 1365,330 1385,360 1440,370 1465,350 1500,355 1532,372 1532,445 1508,455 1527,490 1480,515 1410,530 1395,580 1400,590 1345,650 1340,600 1360,560 1395,520 1410,490 1380,500 1370,530 1330,545 1240,540 1190,600 1225,610 1230,650 1215,690 1180,735 1150,735 1178,685 1145,680 1125,655 1095,620 1070,620 1045,655 970,660 945,650 905,638 895,655 850,655 812,665 760,645 735,610 680,595 650,605 610,625 612,645 560,640 520,645 505,665 515,690 500,710 520,735 500,745 470,720 430,705 450,665 400,640 380,595 355,580 360,530 382,485 370,440"],
  [GREEN, "305,525 300,500 330,455 322,385 340,355 360,352 370,440 382,485 360,520 325,527"],
  [GREEN, "232,580 230,480 250,420 280,380 305,370 322,385 325,430 300,440 300,470 275,500 275,560 255,590 240,592"],
  [GREEN, "325,610 355,580 380,595 400,640 330,645"],
  [GREEN, "303,570 320,566 345,562 355,582 310,580"],
  [GREEN, "315,680 330,645 400,640 450,665 430,695 380,690 370,712 350,685"],
  [GREEN, "195,625 215,610 248,610 252,650 235,655 240,680 200,682 190,660"],
  [GREEN, "205,575 225,565 225,600 208,600"],
  [GREEN, "105,675 135,665 170,655 192,672 195,690 190,720 205,730 165,740 130,728 125,695"],
  [GREEN, "170,655 180,640 195,640 190,660"],
  [TEAL, "70,735 90,730 130,733 165,740 140,765 130,795 95,800 78,790 85,760"],
  [GREEN, "192,690 235,700 238,710 225,715 255,745 275,770 265,780 270,795 240,790 258,780 225,735 195,715"],
  [GREEN, "203,755 213,752 212,775 204,772"],
  [TEAL, "100,565 120,555 115,580 125,600 140,620 135,650 105,660 110,630 115,610 100,590"],
  [GREEN, "60,610 80,597 95,610 88,635 65,640"],
  [GREEN, "820,665 830,700 865,712 880,738 950,748 990,738 1030,710 1065,690 1040,680 1045,655 1070,620 1095,620 1125,655 1145,680 1178,685 1150,735 1125,745 1100,755 1080,772 1060,760 1050,780 1085,790 1065,810 1082,850 1075,890 1040,915 1000,925 975,930 940,920 920,925 900,900 885,870 850,875 820,875 790,865 760,850 740,820 715,790 715,765 740,740 765,720 770,690 800,690"],
  [GREEN, "612,860 650,860 680,850 695,815 690,800 730,795 735,815 715,830 710,850 680,880 675,900 615,895"],
  [INDIA, "710,818 745,810 748,840 765,860 790,875 825,885 840,885 865,870 888,865 880,885 860,900 855,925 848,900 822,890 822,915 790,955 765,970 758,1000 748,1028 735,1025 715,980 700,945 690,930 672,905 680,880 710,850"],
  [GREEN, "822,890 845,895 850,920 825,918"],
  [GREEN, "900,940 925,940 945,970 930,985 915,985 912,1020 935,1050 940,1075 915,1060 900,1025 905,980"],
  [GREEN, "920,925 940,918 965,920 960,945 985,985 980,1010 955,1025 950,1010 970,1000 945,955"],
  [GREEN, "980,940 990,930 997,942 985,952"],
  [GREEN, "1115,785 1135,780 1140,805 1128,818 1115,810"],
  [GREEN, "1160,820 1190,805 1205,800 1220,775 1228,750 1238,760 1232,795 1225,812 1195,820 1165,828"],
  [GREEN, "1225,745 1237,715 1260,730 1240,748"],
  [GREEN, "1145,830 1160,830 1155,850 1145,845"],
  [GREEN, "1238,610 1250,650 1257,700 1242,705 1238,660"],
  [GREEN, "540,310 550,270 570,230 605,195 650,170 668,165 672,180 640,205 600,215 580,265 570,300 582,332 555,330"],
  [GREEN, "850,20 890,20 895,45 910,60 905,98 880,85 865,55 850,45"],
  [GREEN, "910,128 930,80 952,105 935,115"],
  [GREEN, "678,270 690,268 690,276 680,278"],
  [GREEN, "512,365 525,362 525,372 514,375"],
  [GREEN, "1200,195 1230,195 1260,210 1250,230 1205,230"],
  [GREEN, "1270,210 1305,222 1290,230"],
  [GREEN, "1225,255 1245,262 1245,272 1230,268"],
  [GREEN, "1518,325 1532,315 1532,328"],
  [GREEN, "490,20 530,20 520,35 500,40"],
  [GREEN, "560,22 590,24 580,35 545,32"],
  [GREEN, "600,20 620,20 618,32 600,30"],
  [TEAL, "878,1048 900,1060 955,1110 957,1135 925,1115 900,1085"],
  [TEAL, "957,1135 1000,1140 1028,1150 1015,1155 960,1145"],
  [TEAL, "985,1080 1010,1078 1045,1040 1055,1055 1045,1100 1015,1118 990,1105"],
  [TEAL, "1062,1105 1065,1085 1105,1080 1070,1090 1085,1105 1070,1112 1085,1130 1065,1130"],
  [TEAL, "1150,1100 1175,1095 1190,1110 1229,1110 1229,1158 1205,1130 1175,1125"],
  [GREEN, "1070,950 1085,960 1080,985 1092,1000 1080,995 1068,985"],
  [GREEN, "1095,1025 1112,1015 1115,1045 1098,1042"],
  [GREEN, "1018,1260 1045,1245 1085,1225 1100,1200 1125,1205 1145,1180 1195,1185 1190,1200 1228,1225 1240,1172 1255,1210 1290,1255 1325,1300 1325,1330 1300,1392 1270,1402 1235,1395 1205,1370 1200,1350 1185,1365 1165,1340 1120,1345 1095,1360 1045,1370 1030,1362 1035,1330 1015,1280"],
  [GREEN, "1258,1425 1285,1425 1280,1450 1268,1452"],
];

const eastWhite = ["515,705 545,700 555,735 545,770 555,785 545,797 528,790 520,750", "380,1092 400,1090 402,1105 385,1108"];

const eastLines = [
  ["95,560 103,575 98,590", 3], ["128,520 132,530", 2.4], ["228,575 235,600 215,605", 2],
  ["1345,650 1320,690 1290,715 1262,728", 1.4, "8 5"],
  ["1410,545 1440,520 1500,510", 1.6],
  ["1420,590 1435,602", 2, "3 4"],
  ["1125,888 1145,860 1160,845", 1.6, "4 5"],
  ["1085,990 1105,1000 1110,1015", 3, "5 3"], ["1045,1030 1065,1010", 1.4],
  ["1030,1153 1080,1155 1130,1148", 2.4, "10 4"], ["1060,1163 1105,1160 1090,1170", 1.6, "8 4"],
  ["1122,1080 1135,1090 1125,1100", 2.4], ["1100,1112 1145,1115", 1.8, "6 4"], ["1150,1095 1175,1100", 2],
  ["855,965 858,1010 875,1040", 1.4, "4 5"], ["1080,935 1082,950", 1.6, "3 4"],
  ["805,230 812,248", 2.4], ["870,160 885,185", 2, "4 4"], ["775,195 775,225", 2, "4 5"], ["730,65 738,72", 2], ["825,160 830,155", 2],
  ["715,270 730,290 745,275 765,300", 1.6], ["1188,205 1192,215", 2], ["1288,174 1295,176", 2], ["960,118 970,125", 2],
  ["405,440 420,465 430,450", 2], ["1150,828 1175,818 1200,812", 2],
  ["990,255 1010,240 1012,262", 1.8],
  ["1185,600 1205,605 1200,618", 2], ["545,300 560,320 575,332", 1.6], ["240,575 265,585 285,565", 1.4],
  ["1258,1412 1262,1420", 2], ["1195,1355 1205,1380", 1.6],
];

const mapLabels = [
  ["Canada", 1565, 634], ["USA", 1641, 756], ["Mexico", 1588, 849], ["Colombia", 1681, 898], ["alaysia", 1346, 925], ["Indonesia", 1900, 928],
  ["Brazil", 1828, 980], ["Argentina", 1758, 1082], ["UK", 1992, 638], ["Germany", 2068, 684], ["Spain", 2006, 754], ["South Korea", 2142, 740],
  ["Egypt", 2142, 824], ["South Africa", 2068, 1068], ["Russia", 2441, 588], ["China", 2431, 782], ["Japan", 2592, 787], ["India", 2349, 838],
  ["Thailand", 2413, 870], ["Australia", 2538, 1036], ["Malaysia", 2768, 924],
];

const COAST = "#707a78";

const Shapes = ({ list }) =>
  list.map(([fill, pts, plain], i) => (
    <path key={i} d={coast(pts)} fill={fill} stroke={plain ? "#cfcfcf" : COAST} strokeWidth={plain ? 0.6 : 1.2} vectorEffect="non-scaling-stroke" />
  ));

const Lines = ({ list }) =>
  list.map(([pts, w, dash], i) => (
    <path key={i} d={coast(pts, false, 0.4)} fill="none" stroke={COAST} strokeWidth={w} strokeDasharray={dash} vectorEffect="non-scaling-stroke" />
  ));

const WorldMap = () => (
  <svg viewBox="1345 342 1457 824" width="1457" height="824" role="img" aria-label="Channels by country">
    <g transform="translate(2000 330) scale(.523 .542)">
      {eastGray.map((p, i) => <path key={i} d={coast(p)} fill={GRAY} />)}
      {borders.map((p, i) => <path key={i} d={coast(p, false)} fill="none" stroke="#b4b4b4" strokeWidth="1.4" vectorEffect="non-scaling-stroke" />)}
      {eastWhite.map((p, i) => <path key={i} d={coast(p)} fill="#fff" />)}
      <Shapes list={east} />
      <Lines list={eastLines} />
    </g>
    <g transform="translate(1320 330) scale(.4847 .542)">
      <Shapes list={west} />
      {westGrayLines.map((p, i) => <path key={i} d={coast(p, false)} fill="none" stroke="#b4b4b4" strokeWidth="1.4" vectorEffect="non-scaling-stroke" />)}
      {westWhite.map((p, i) => <path key={i} d={coast(p)} fill="#fff" stroke={COAST} strokeWidth="1" vectorEffect="non-scaling-stroke" />)}
      {fjords.map((p, i) => <path key={i} d={coast(p, false, 0.3)} fill="none" stroke={COAST} strokeWidth="4.4" vectorEffect="non-scaling-stroke" />)}
      {fjords.map((p, i) => <path key={i} d={coast(p, false, 0.3)} fill="none" stroke="#fff" strokeWidth="2.4" vectorEffect="non-scaling-stroke" />)}
      <Lines list={westLines} />
    </g>
    <g fontFamily={viz} fontSize="35" fontWeight="300" fill="#000">
      {mapLabels.map(([t, x, y]) => <text key={t} x={x} y={y}>{t}</text>)}
    </g>
  </svg>
);

/* ---------- charts ---------- */

const LIGHT = "#b9ddf1";
const MID = "#8db9db";
const genres = [
  ["Entertainment", 250, "#4776a5", true], ["Music", 224, "#2a5783", true], ["People & Blogs", 118, MID], ["Gaming", 102, MID],
  ["Film & Animation", 69, MID], ["Comedy", 63, LIGHT], ["Education", 50, MID], ["Howto & Style", 45, LIGHT], ["News & Politics", 26, LIGHT],
  ["Science & Technology", 18, LIGHT], ["Sports", 10, LIGHT], ["Pets & Animals", 6, LIGHT], ["Nonprofits & Activism", 2, LIGHT], ["Autos & Vehicles", 1, LIGHT],
];
const xTicks = [0, 20, 40, 60, 80, 100, 120, 140, 160, 180, 200, 220, 240, 260];
const years = [22, 70, 45, 45, 63, 47, 93, 84, 87, 118, 90, 76, 60, 45, 25, 10, 4];
const STEP = 946 / 17;
const yearX = (i) => 2589 + STEP * (i + 0.5);
const countY = (v) => 1862 - v * 5.4;

const LineChart = () => (
  <LineSvg viewBox="2438 1167 1186 837" role="img" aria-label="Channels by start year">
    <g stroke="#ececec" strokeWidth="2">
      <path d="M2589 1185V1862M2578 1862H3535" />
      {[20, 40, 60, 80, 100, 120].map((v) => <path key={v} d={`M2578 ${countY(v)}H2589`} />)}
      {Array.from({ length: 18 }, (_, i) => <path key={i} d={`M${2589 + i * STEP} 1862V1869`} />)}
    </g>
    <g fontSize="40" fontWeight="300" fill="#666">
      {[20, 40, 60, 80, 100, 120].map((v) => <text key={v} x="2573" y={countY(v) + 16} textAnchor="end">{v}</text>)}
      <text x="2573" y="1849" textAnchor="end">0</text>
      {[1, 3, 5, 7, 9, 11, 13, 15].map((i) => (
        <text key={i} textAnchor="end" transform={`translate(${yearX(i) + 13} 1873) rotate(-90)`}>{2005 + i}</text>
      ))}
    </g>
    <text fontSize="39" fontWeight="500" fill="#333" textAnchor="middle" transform="translate(2477 1521) rotate(-90)">Count of YT Channels</text>
    <g fontSize="35" fontWeight="500" fill="#000">
      <text x="3516" y="1905">Start</text>
      <text x="3516" y="1951">Year</text>
    </g>
    <polyline points={years.map((v, i) => `${yearX(i)},${countY(v)}`).join(" ")} fill="none" stroke="#4e79a7" strokeWidth="6" strokeLinejoin="round" strokeLinecap="round" />
  </LineSvg>
);

/* ---------- show me thumbnails ---------- */

const colX = [387, 755, 1122];
const rowY = [285, 515, 744, 973, 1202, 1432, 97, 340];
const rowH = [201, 201, 201, 201, 201, 201, 212, 212];
const B1 = "#ccd9e7";
const B2 = "#e3f0fb";
const B3 = "#d8e5f0";
const G1 = "#cde6dc";
const G2 = "#e1f2e8";
const O1 = "#fbdcc2";
const O2 = "#ffebd9";
const Y1 = "#ffefcf";
const R1 = "#f6cfce";
const R2 = "#ffe0e0";

const rects = (list) => list.map(([x, y, w, h, f], i) => <rect key={i} x={x} y={y} width={w} height={h} fill={f} />);
const line = (d, c, w = 3) => <path d={d} fill="none" stroke={c} strokeWidth={w} vectorEffect="non-scaling-stroke" />;
const num = (x, y, t) => <text key={`${x}${y}`} x={x} y={y}>{t}</text>;

const americas = "M428 570L450 565L475 570L500 566L500 578L485 585L480 597L465 610L448 620L465 625L488 630L508 640L500 655L490 672L482 672L478 650L468 635L460 622L445 615L435 595L430 580Z";
const oldWorld = "M527 590L535 575L550 572L580 575L605 567L640 573L672 575L668 590L645 600L640 615L625 620L618 612L600 620L585 610L578 620L585 625L570 645L562 658L553 640L548 628L530 622L528 605L540 600Z";
const oceania = "M630 620L640 630L655 640L640 635ZM645 652L660 640L677 650L675 660L650 660Z";
const arctic = "M500 566L535 566L520 575L510 580Z";

const thumbs = [
  <g>
    <rect x="18" y="15" width="100" height="70" fill="#fff" stroke="#e3e3e3" />
    {rects([[20, 17, 96, 17, "#f4f4f4"], [20, 52, 96, 18, "#f4f4f4"], [24, 25, 10, 3, "#e4e4e4"], [24, 43, 12, 3, "#e4e4e4"], [24, 60, 8, 3, "#e4e4e4"]])}
    {[num(47, 29, "1234"), num(82, 29, "678"), num(47, 47, "368"), num(82, 47, "3034"), num(47, 65, "2620"), num(82, 65, "2559"), num(47, 81, "971"), num(82, 81, "322")]}
  </g>,
  rects([[850, 318, 37, 30, G2], [899, 318, 32, 26, O1], [953, 318, 37, 30, G1], [1004, 318, 20, 16, G2], [850, 368, 37, 30, G2], [902, 368, 19, 16, O2], [953, 368, 29, 24, G2], [1004, 368, 37, 30, G2], [850, 418, 47, 38, G1], [902, 418, 39, 32, G2], [953, 418, 47, 38, G1], [1004, 418, 37, 30, G2], [813, 330, 25, 8, "#ebebeb"], [813, 370, 30, 8, "#ebebeb"], [813, 410, 20, 8, "#ebebeb"]]),
  <g>
    <rect x="18" y="15" width="100" height="70" fill="#fff" stroke="#e3e3e3" />
    {rects([[40, 16, 76, 68, "#cdcdcd"], [42, 16, 36, 18, G1], [80, 16, 36, 18, G2], [42, 36, 36, 18, O2], [80, 36, 36, 18, G1], [42, 56, 36, 18, G2], [80, 56, 36, 18, G2], [42, 76, 36, 8, G1], [80, 76, 36, 8, G2], [24, 23, 10, 3, "#e4e4e4"], [24, 43, 12, 3, "#e4e4e4"], [24, 63, 8, 3, "#e4e4e4"]])}
    {[num(45, 28, "1234"), num(84, 28, "546"), num(45, 49, "368"), num(84, 49, "340"), num(45, 68, "2620"), num(84, 68, "53890")]}
  </g>,
  <g>
    <path d={americas + oldWorld + oceania + arctic} fill="#f3f3f3" />
    {[[437, 611, 10, "#eebfc4"], [442, 597, 6, "#eebfc4"], [472, 597, 8, R2], [539, 581, 8, R1], [532, 595, 8, R2], [556, 597, 7, "#eebfc4"], [615, 605, 12, "#eebfc4"], [638, 603, 6, R1], [633, 617, 5, "#eebfc4"], [641, 631, 10, R1], [574, 621, 6, R1], [471, 634, 6, "#eebfc4"], [499, 641, 8, R2], [657, 655, 6, "#eebfc4"]].map(([x, y, r, f], i) => <ellipse key={i} cx={x} cy={y} rx={r} ry={r * 0.82} fill={f} />)}
  </g>,
  <g transform="translate(367 0)"><path d={americas + arctic} fill={R1} /><path d={oldWorld} fill={R2} /><path d={oceania} fill={R1} /></g>,
  <g>
    <path d="M1289 615H1218A71 58 0 0 1 1289 557Z" fill={R1} />
    <path d="M1289 615V557A71 58 0 0 1 1339 574Z" fill={R2} />
    <path d="M1289 615L1339 574A71 58 0 0 1 1339 656Z" fill={B1} />
    <path d="M1289 615L1339 656A71 58 0 0 1 1218 615Z" fill={B2} />
  </g>,
  rects([[443, 788, 118, 16, B1], [443, 820, 216, 16, B1], [443, 852, 59, 16, B1], [443, 885, 172, 16, B1]]),
  rects([[821, 800, 39, 28, B1], [821, 828, 39, 89, B2], [872, 824, 39, 32, B1], [872, 856, 39, 61, B2], [931, 812, 39, 77, B1], [931, 889, 39, 28, B2], [990, 840, 39, 36, B1], [990, 876, 39, 41, B2]]),
  rects([[1242, 764, 4, 161, "#eee"], [1333, 764, 4, 161, "#eee"], [1176, 866, 20, 59, B1], [1203, 834, 20, 91, B2], [1267, 804, 19, 121, B1], [1294, 850, 19, 75, B2], [1355, 887, 19, 38, B1], [1382, 828, 19, 97, B2]]),
  rects([[446, 1013, 103, 60, B3], [446, 1077, 103, 57, B1], [554, 1013, 54, 40, B3], [612, 1013, 49, 40, B2], [554, 1057, 34, 41, R2], [593, 1057, 34, 41, B3], [632, 1057, 29, 41, B2], [554, 1102, 34, 32, R1], [593, 1102, 34, 32, B2], [632, 1102, 29, 16, B1], [632, 1122, 29, 12, B2]]),
  <g fill="none" strokeWidth="1.8">
    {[[838, 1036, B3], [838, 1052, B1], [838, 1108, B1], [924, 1036, B1], [924, 1093, B1], [924, 1110, B3], [1012, 1036, B3], [1010, 1066, B2], [1010, 1129, B2]].map(([x, y, c], i) => <ellipse key={i} cx={x} cy={y} rx="24" ry="19" stroke={c} vectorEffect="non-scaling-stroke" />)}
    <path d="M902 1158Q908 1142 925 1142Q942 1142 949 1158" stroke={B2} vectorEffect="non-scaling-stroke" />
  </g>,
  <g fill="none" strokeWidth="1.8">
    <rect x="1289" y="993" width="4" height="161" fill="#eee" />
    {[[1196, 1029, B3], [1196, 1048, B2], [1243, 1045, B1], [1243, 1093, B2], [1196, 1124, B3], [1243, 1132, B1], [1341, 1031, B1], [1387, 1047, B1], [1387, 1064, B3], [1341, 1108, B1], [1341, 1123, B3], [1387, 1115, B3]].map(([x, y, c], i) => <ellipse key={i} cx={x} cy={y} rx="18" ry="14" stroke={c} vectorEffect="non-scaling-stroke" />)}
  </g>,
  <g>{line("M440 1291L477 1301L533 1266L618 1319L668 1310", Y1)}{line("M443 1264L477 1242L533 1302L578 1270L615 1299L668 1277", O1)}{line("M440 1321L477 1352L558 1316L618 1348L668 1337", B1)}</g>,
  <g>{line("M923 1222V1382", "#eee", 2)}{line("M803 1315L838 1310L872 1281L903 1299M936 1315L970 1304L1004 1312L1040 1297", Y1)}{line("M803 1288L840 1295L870 1266L906 1268M940 1288L972 1255L1000 1275L1040 1268", O1)}{line("M803 1343L838 1352L870 1328L906 1328M940 1344L970 1327L1000 1338L1040 1327", B1)}</g>,
  <g>{line("M1197 1277L1240 1244L1283 1275L1312 1260L1358 1288L1388 1266", O1)}{line("M1197 1311L1239 1297L1283 1337L1312 1322L1359 1342L1388 1312", B1)}{line("M1164 1240h14M1164 1266h14M1164 1291h14M1164 1316h14M1164 1341h14M1164 1367h14M1401 1240h14M1401 1253h14M1401 1266h14M1401 1279h14M1401 1291h14M1401 1304h14M1401 1316h14M1401 1329h14M1401 1341h14M1401 1354h14M1401 1367h14", "#ececec", 1.6)}</g>,
  <g><path d="M431 1536L488 1479L590 1533L676 1511V1604H431Z" fill={B1} /><path d="M431 1543L488 1511L590 1566L676 1524V1604H431Z" fill="#fde3c9" /><path d="M431 1572L488 1553L590 1582L676 1560V1604H431Z" fill="#fff3e4" /></g>,
  <g>{[799, 926].map((x) => <g key={x} transform={`translate(${x} 0)`}><path d="M0 1530L28 1479L76 1533L117 1508V1604H0Z" fill={B1} /><path d="M0 1540L28 1511L76 1566L117 1524V1604H0Z" fill="#fde3c9" /><path d="M0 1572L28 1553L76 1582L117 1560V1604H0Z" fill="#fff3e4" /></g>)}</g>,
  <g>{rects([[1198, 1538, 25, 66, B1], [1240, 1518, 24, 86, B1], [1279, 1554, 24, 50, B1], [1321, 1480, 24, 124, B1], [1362, 1534, 25, 70, B1]])}{line("M1206 1522L1249 1489L1290 1536L1333 1502L1378 1537", O1)}{line("M1164 1470h14M1164 1496h14M1164 1520h14M1164 1546h14M1164 1571h14M1164 1596h14M1401 1470h14M1401 1483h14M1401 1496h14M1401 1508h14M1401 1520h14M1401 1533h14M1401 1546h14M1401 1558h14M1401 1571h14M1401 1583h14M1401 1596h14", "#ececec", 1.6)}</g>,
  <g>
    {line([[588, 147], [571, 192], [644, 218], [505, 250], [593, 244]].map(([x, y]) => `M${x - 22} ${y}H${x + 22}M${x} ${y - 19}V${y + 19}`).join(""), G1, 2)}
    {[[526, 165], [624, 178], [485, 208], [541, 225], [458, 258]].map(([x, y]) => <ellipse key={x} cx={x} cy={y} rx="18" ry="15" fill="none" stroke={O1} strokeWidth="2" vectorEffect="non-scaling-stroke" />)}
  </g>,
  rects([[813, 263, 20, 12, G1], [838, 242, 19, 33, G1], [862, 203, 20, 72, G1], [887, 161, 19, 114, G1], [911, 144, 20, 131, G1], [936, 161, 19, 114, G1], [960, 203, 20, 72, G1], [985, 242, 19, 33, G1], [1009, 263, 20, 12, G1]]),
  <g>{rects([[1183, 189, 35, 17, G2], [1183, 206, 35, 36, G1], [1245, 170, 34, 36, G2], [1245, 206, 34, 21, G1], [1306, 184, 34, 34, G2], [1306, 218, 34, 32, G1], [1367, 161, 34, 49, G2], [1367, 210, 34, 21, G1]])}{line("M1200 158V257M1188 158h25M1188 257h25M1262 150V265M1249 150h25M1249 265h25M1323 146V269M1311 146h25M1311 269h25M1384 138V273M1372 138h25M1372 273h25", "#bdbdbd", 2)}</g>,
  rects([[434, 373, 44, 34, G1], [514, 373, 20, 34, O1], [539, 373, 20, 34, O2], [595, 373, 10, 34, O1], [622, 373, 39, 34, O2], [434, 426, 29, 34, G2], [468, 426, 15, 34, G1], [505, 426, 19, 34, G1], [539, 426, 71, 34, G2], [637, 426, 39, 34, O1], [434, 479, 7, 36, G1], [461, 479, 41, 36, O2], [510, 479, 9, 36, O1], [529, 479, 20, 36, G2], [581, 479, 34, 36, G1], [642, 479, 19, 36, O2]]),
  rects([[811, 377, 232, 34, "#fafafa"], [811, 377, 122, 34, "#f2f2f2"], [811, 386, 122, 17, G1], [948, 377, 5, 34, "#bdbdbd"], [811, 430, 232, 34, "#fafafa"], [811, 430, 142, 34, "#f2f2f2"], [811, 439, 196, 17, G1], [982, 430, 5, 34, "#bdbdbd"], [811, 483, 232, 36, "#fafafa"], [811, 483, 122, 36, "#f2f2f2"], [811, 492, 103, 19, G1], [1012, 483, 5, 36, "#bdbdbd"]]),
  <g>{[[1227, 473, 46, G2], [1232, 412, 17, G1], [1280, 402, 25, G1], [1327, 405, 15, G2], [1302, 448, 28, O2], [1375, 425, 33, O2], [1349, 470, 18, O1], [1300, 496, 21, G1]].map(([x, y, r, f]) => <ellipse key={x} cx={x} cy={y} rx={r} ry={r * 0.88} fill={f} />)}</g>,
];

const thumbNames = ["Text table", "Heat map", "Highlight table", "Symbol map", "Filled map", "Pie chart", "Horizontal bars", "Stacked bars", "Side-by-side bars", "Treemap", "Circle views", "Side-by-side circles", "Continuous lines", "Discrete lines", "Dual lines", "Continuous area", "Discrete area", "Dual combination", "Scatter plot", "Histogram", "Box plot", "Gantt", "Bullet graph", "Packed bubbles"];

const Thumb = ({ i }) => {
  const r = Math.floor(i / 3);
  const flat = i === 0 || i === 2;
  return (
    <svg
      viewBox={flat ? "0 0 134 100" : `${colX[i % 3]} ${rowY[r]} 328 ${rowH[r]}`}
      preserveAspectRatio="none"
      fontFamily={ui}
      fontSize="9"
      fill="#c0c0c0"
      aria-hidden="true"
    >
      {thumbs[i]}
    </svg>
  );
};

/* ---------- app ---------- */

const sheets = [["Country-wise", 1], ["Genre-wise", 1], ["Year-wise"], ["Language-wise"], ["Owned By"], ["Gender"], ["Top 7 Countries"], ["Year-wise (2)", 1]];

export default function App() {
  return (
    <Window>
      <Global />
      <TitleBar>
        <AppIcon />
        <span>Tableau - FinalBook</span>
        <WindowButtons>
          <WindowButton aria-label="Minimize"><Icon w={20} h={20}><path d="M0 10H20" /></Icon></WindowButton>
          <WindowButton aria-label="Restore"><Icon w={20} h={20}><rect x="1" y="5" width="14" height="14" rx="2" /><path d="M5 1H14Q19 1 19 6V15" /></Icon></WindowButton>
          <WindowButton aria-label="Close"><Icon w={20} h={20}><path d="M0 0L20 20M20 0L0 20" /></Icon></WindowButton>
        </WindowButtons>
      </TitleBar>

      <MenuBar>
        {["File", "Data", "Worksheet", "Dashboard", "Story", "Analysis", "Map", "Format", "Server", "Window", "Help"].map((m) => <button key={m}>{m}</button>)}
      </MenuBar>

      <ToolBar>
        <ToolGroup><Tool $w={112} aria-label="Start page"><LogoIcon /></Tool></ToolGroup>
        {toolbar.map((g, gi) => (
          <ToolGroup key={gi} $left={g.left} $right={g.right}>
            {g.items.map(([name, w, label, off]) => (
              <Tool key={label} $w={w} disabled={!!off} aria-label={label}>{name === "caret" ? <Caret /> : tools[name]}</Tool>
            ))}
            {g.fit && <FitBox><FitSelect disabled aria-label="Fit" /><Caret s={14} /></FitBox>}
          </ToolGroup>
        ))}
        <ToolGroup $last><Tool $w={104} aria-label="Share">{tools.share}</Tool></ToolGroup>
      </ToolBar>

      <Body>
        <Side>
          <SideTabs>
            <SideTab $active>Dashboard</SideTab>
            <SideTab>Layout<Icon w={12} h={22}><path d="M11 1L2 11L11 21" /></Icon></SideTab>
          </SideTabs>
          <Section $pad="24px 36px 25px">
            <Device $selected>Default</Device>
            <Device $nested>Phone</Device>
            <PreviewButton>Device Preview</PreviewButton>
          </Section>
          <Section $pad="8px 36px 41px">
            <Heading>Size</Heading>
            <SizeField>
              <SizeSelect aria-label="Size"><option>Custom size (1550 x 900)</option></SizeSelect>
              <Caret s={13} />
            </SizeField>
          </Section>
          <Section $pad="8px 36px 0" $grow>
            <Heading>Sheets</Heading>
            <SheetList>
              {sheets.map(([name, used]) => <SheetItem key={name}><SheetIcon used={used} />{name}</SheetItem>)}
            </SheetList>
          </Section>
          <Section $pad="8px 38px 40px 36px" $last>
            <Heading>Objects</Heading>
            <ObjectGrid>
              {objects.map((o) => <ObjectItem key={o}><Icon w={36} h={36}>{objectIcons[o]}</Icon>{o}</ObjectItem>)}
            </ObjectGrid>
            <Toggle>
              <ToggleButton $on aria-pressed="true">Tiled</ToggleButton>
              <ToggleButton aria-pressed="false">Floating</ToggleButton>
            </Toggle>
            <CheckLabel>
              <CheckBox>
                <input type="checkbox" defaultChecked />
                <Icon w={36} h={36} sw={4}><path d="M9 18L14 23L23 9" /></Icon>
              </CheckBox>
              Show dashboard title
            </CheckLabel>
          </Section>
        </Side>

        <Stage>
          <Canvas>
            <DashTitle>Composition of Top 1000 YT Channels - At a Glance</DashTitle>
            <MapPane>
              <Attribution>© 2023 Mapbox © OpenStreetMap</Attribution>
              <WorldMap />
              <Legend $pad="612px 0 0 435px">
                <LegendTitle>Count</LegendTitle>
                <LegendRow $top={10}>1<Ramp $fill="linear-gradient(90deg, #c5e8db, #74b5c8, #2a5783)" /></LegendRow>
              </Legend>
            </MapPane>
            <Lower>
              <BarChart>
                <Bars>
                  {genres.map(([name, n, color, show]) => (
                    <BarRow key={name}>
                      <BarLabel>{name}</BarLabel>
                      <Bar $color={color} style={{ width: n * 5.05 }} />
                      {show && <BarValue>{n}</BarValue>}
                    </BarRow>
                  ))}
                </Bars>
                <BarFoot>
                  <FootLegend>
                    <Legend $pad="60px 0 0 92px">
                      <LegendTitle>Viewership</LegendTitle>
                      <LegendRow $top={9}>7B<Ramp $fill="linear-gradient(90deg, #b9ddf1 20%, #8db9db 20% 40%, #6798c1 40% 60%, #4776a5 60% 80%, #2a5783 80%)" />3T</LegendRow>
                    </Legend>
                  </FootLegend>
                  <FootAxis>
                    <AxisRow>{xTicks.map((t) => <AxisTick key={t} $first={t === 0}>{t}</AxisTick>)}</AxisRow>
                    <AxisTitle>Count of YT Channels<Icon w={24} h={22} sw={3}><path d="M2 3H24M2 10H18M2 17H11" /></Icon></AxisTitle>
                  </FootAxis>
                </BarFoot>
              </BarChart>
              <LineChart />
            </Lower>
          </Canvas>
        </Stage>
        <ScrollTrack />
      </Body>

      <SheetTabs>
        <SheetTab $source><Icon w={18} h={26}><ellipse cx="9" cy="6" rx="7" ry="4" /><path d="M2 6V20Q2 24 9 24Q16 24 16 20V6" /></Icon>Data Source</SheetTab>
        <SheetTab>Country-wise</SheetTab>
        <SheetTab>Genre-wise</SheetTab>
        <SheetTab>Year-wise</SheetTab>
        <SheetTab $active><GridIcon />Dashboard I</SheetTab>
        <SheetTab><GridIcon />Dashboard II</SheetTab>
        <SheetTab>Language-wise</SheetTab>
        <SheetTab>Owned By</SheetTab>
        <SheetTab>Gender</SheetTab>
        <SheetTab>Top 7 Countries</SheetTab>
        <SheetTab>Year-wise (2)</SheetTab>
        <SheetTab $tool aria-label="New worksheet"><Icon w={32} h={32}><path d="M20 23H4V3H24V18M9 18V13M14 18V8M19 18V11" /><path strokeWidth="3.4" d={cross(25, 24, 6)} /></Icon></SheetTab>
        <SheetTab $tool aria-label="New dashboard"><Icon w={32} h={32}><path d="M18 23H4V3H24V18M14 3V23M4 13H24" /><path strokeWidth="3.4" d={cross(25, 24, 6)} /></Icon></SheetTab>
        <SheetTab $tool aria-label="New story"><Icon w={32} h={32}><path d="M14 24L3 19V3L14 8L24 3V18M14 8V24" /><path strokeWidth="3.4" d={cross(25, 24, 6)} /></Icon></SheetTab>
      </SheetTabs>

      <ShowMe aria-label="Show Me">
        <ShowMeTab>
          <svg width="32" height="30" aria-hidden="true">
            <rect width="25" height="6" fill="#866f95" /><rect y="8" width="32" height="6" fill="#84a5cb" /><rect y="16" width="13" height="6" fill="#f2a477" /><rect y="24" width="19" height="6" fill="#f96f82" />
          </svg>
          Show Me
        </ShowMeTab>
        <ShowMeBody>
          <Cards>{thumbNames.map((n, i) => <Card key={n} aria-label={n}><Thumb i={i} /></Card>)}</Cards>
          <SelectView>Select view</SelectView>
        </ShowMeBody>
      </ShowMe>

      <Widget>
        <svg width="56" height="68" viewBox="0 0 56 68" aria-hidden="true">
          <defs>
            <linearGradient id="wing" x1="0" y1="1" x2="1" y2="0"><stop offset="0" stopColor="#a9cdf3" /><stop offset="1" stopColor="#e3f1fc" /></linearGradient>
          </defs>
          <path d="M28 1L50 5L24 35Q20 39 12 38Q0 36 3 28Z" fill="url(#wing)" />
          <path d="M1 61L34 29Q37 26 42 27Q54 29 50 39L24 67Z" fill="url(#wing)" />
        </svg>
      </Widget>
    </Window>
  );
}
